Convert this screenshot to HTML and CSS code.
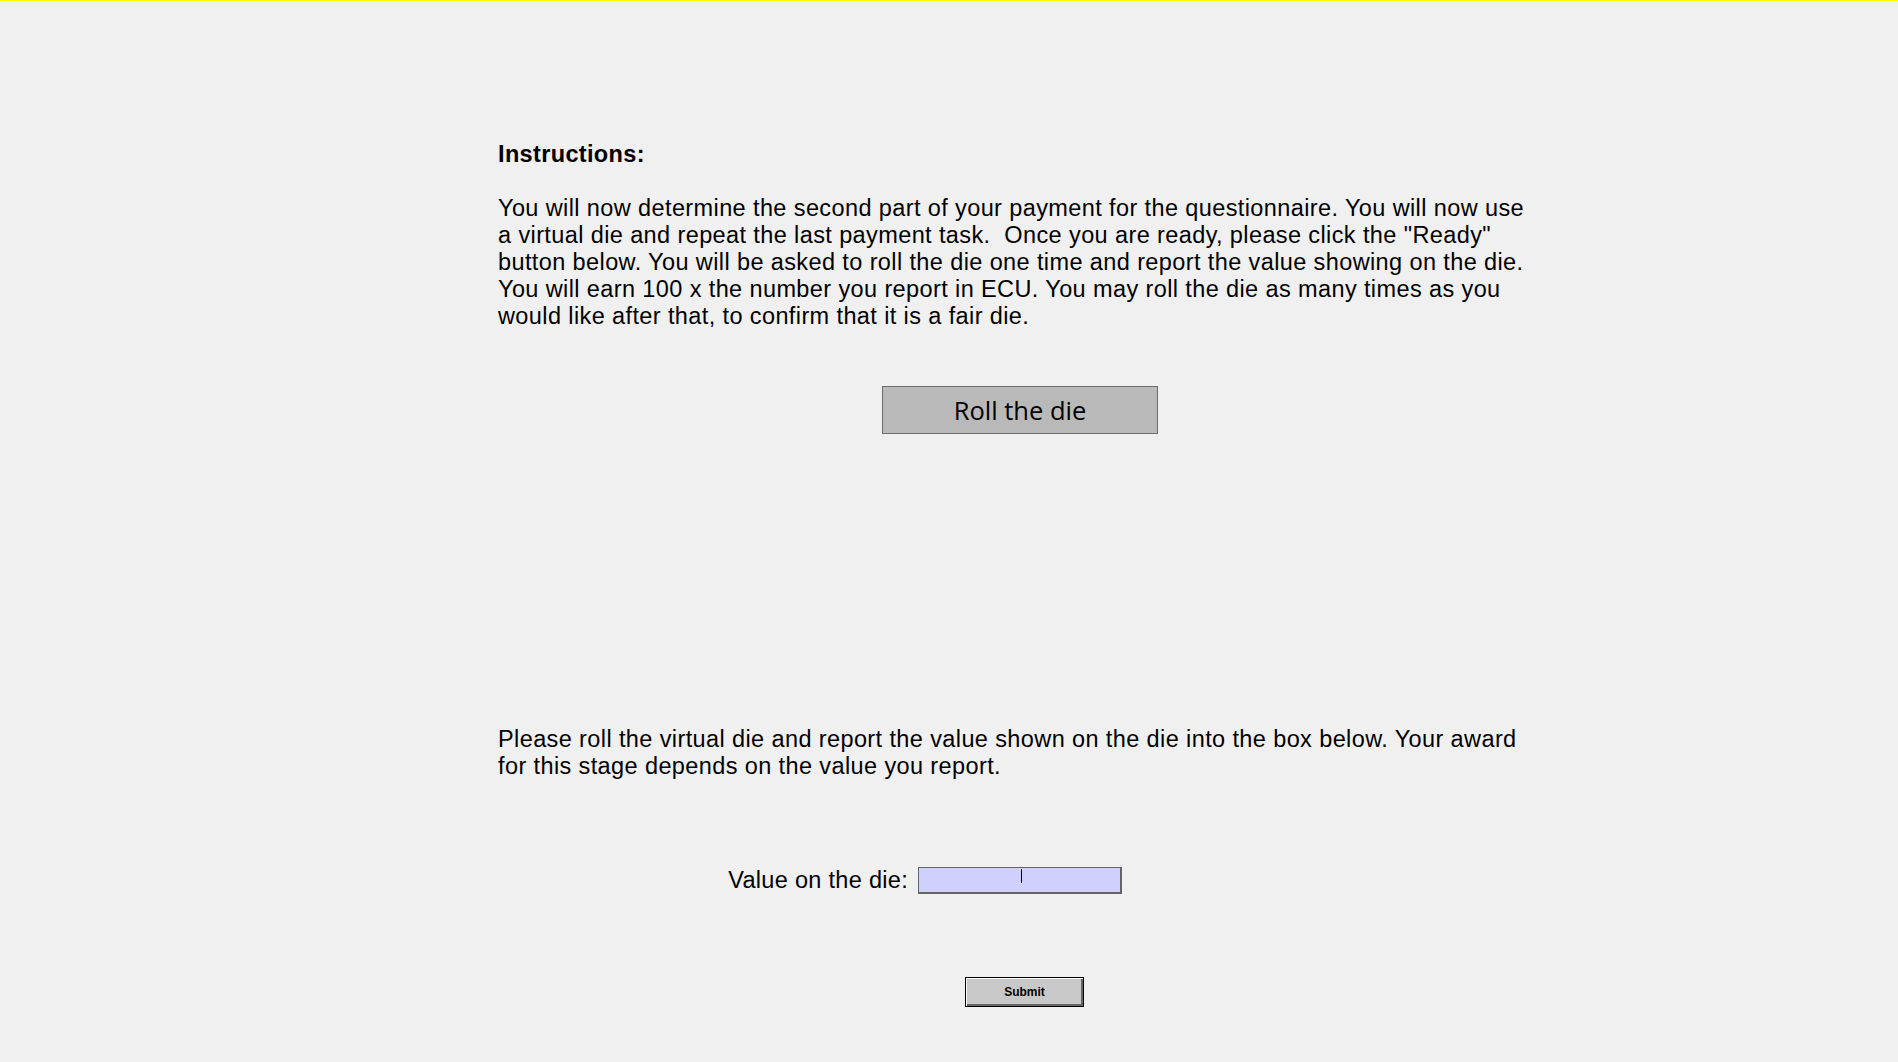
FILE: index.html
```html
<!DOCTYPE html>
<html lang="en">
<head>
<meta charset="utf-8">
<title>Instructions</title>
<link rel="stylesheet" href="styles.css">
</head>
<body>
<div class="page">
  <div class="content">
    <h2 class="instr">Instructions:</h2>
    <p class="text">You will now determine the second part of your payment for the questionnaire. You will now use a virtual die and repeat the last payment task.&nbsp; Once you are ready, please click the "Ready" button below. You will be asked to roll the die one time and report the value showing on the die. You will earn 100 x the number you report in ECU. You may roll the die as many times as you would like after that, to confirm that it is a fair die.</p>
    <button class="roll" type="button">Roll the die</button>
    <p class="text prompt">Please roll the virtual die and report the value shown on the die into the box below. Your award for this stage depends on the value you report.</p>
    <div class="row">
      <label class="label" for="val">Value on the die:</label>
      <span class="field">
        <input id="val" class="input" type="text">
        <span class="caret"></span>
      </span>
    </div>
    <button class="submit" type="button">Submit</button>
  </div>
</div>
</body>
</html>
```

FILE: styles.css
```css
html, body {
  margin: 0;
  padding: 0;
}
body {
  background: #f0f0f0;
  border-top: 1px solid #ffff00;
  font-family: "Liberation Sans", Arial, sans-serif;
  color: #000;
  min-height: 1061px;
  box-sizing: border-box;
}
.page {
  padding-top: 140px;
  padding-left: 498px;
}
.content {
  width: 1044px;
  display: flex;
  flex-direction: column;
  align-items: flex-start;
}
.instr {
  margin: 0;
  font-size: 23.5px;
  font-weight: bold;
  line-height: 27px;
  letter-spacing: 0.35px;
}
.text {
  margin: 27px 0 0 0;
  max-width: 1040px;
  font-size: 23.5px;
  line-height: 27px;
  letter-spacing: 0.39px;
}
.roll {
  align-self: center;
  margin-top: 56px;
  width: 276px;
  height: 48px;
  background: #b9b9b9;
  border: 1px solid #6d6d6d;
  font-family: "Open Sans", "Noto Sans", sans-serif;
  font-size: 25.5px;
  color: #000;
  padding: 0;
}
.prompt {
  margin-top: 292px;
}
.row {
  margin-top: 87px;
  display: flex;
  align-items: center;
  gap: 10px;
}
.label {
  width: 410px;
  text-align: right;
  font-size: 23.5px;
  line-height: 27px;
  letter-spacing: 0.3px;
}
.field {
  position: relative;
  display: block;
  width: 204px;
  height: 27px;
}
.input {
  display: block;
  box-sizing: border-box;
  width: 204px;
  height: 27px;
  margin: 0;
  background: #d0d0ff;
  border: 2px solid #646464;
  border-width: 1px 2px 2px 1px;
  outline: none;
  padding: 0;
}
.caret {
  position: absolute;
  left: 103px;
  top: 2px;
  width: 1px;
  height: 14px;
  background: #000;
}
.submit {
  margin-top: 83px;
  margin-left: 467px;
  width: 119px;
  height: 30px;
  box-sizing: border-box;
  background: #c8c8c8;
  border: 1px solid #000;
  box-shadow: inset 1px 1px 0 #fff, inset -2px -2px 0 #646464;
  font-family: "Liberation Sans", Arial, sans-serif;
  font-weight: bold;
  font-size: 12px;
  color: #000;
  padding: 0;
}
```
